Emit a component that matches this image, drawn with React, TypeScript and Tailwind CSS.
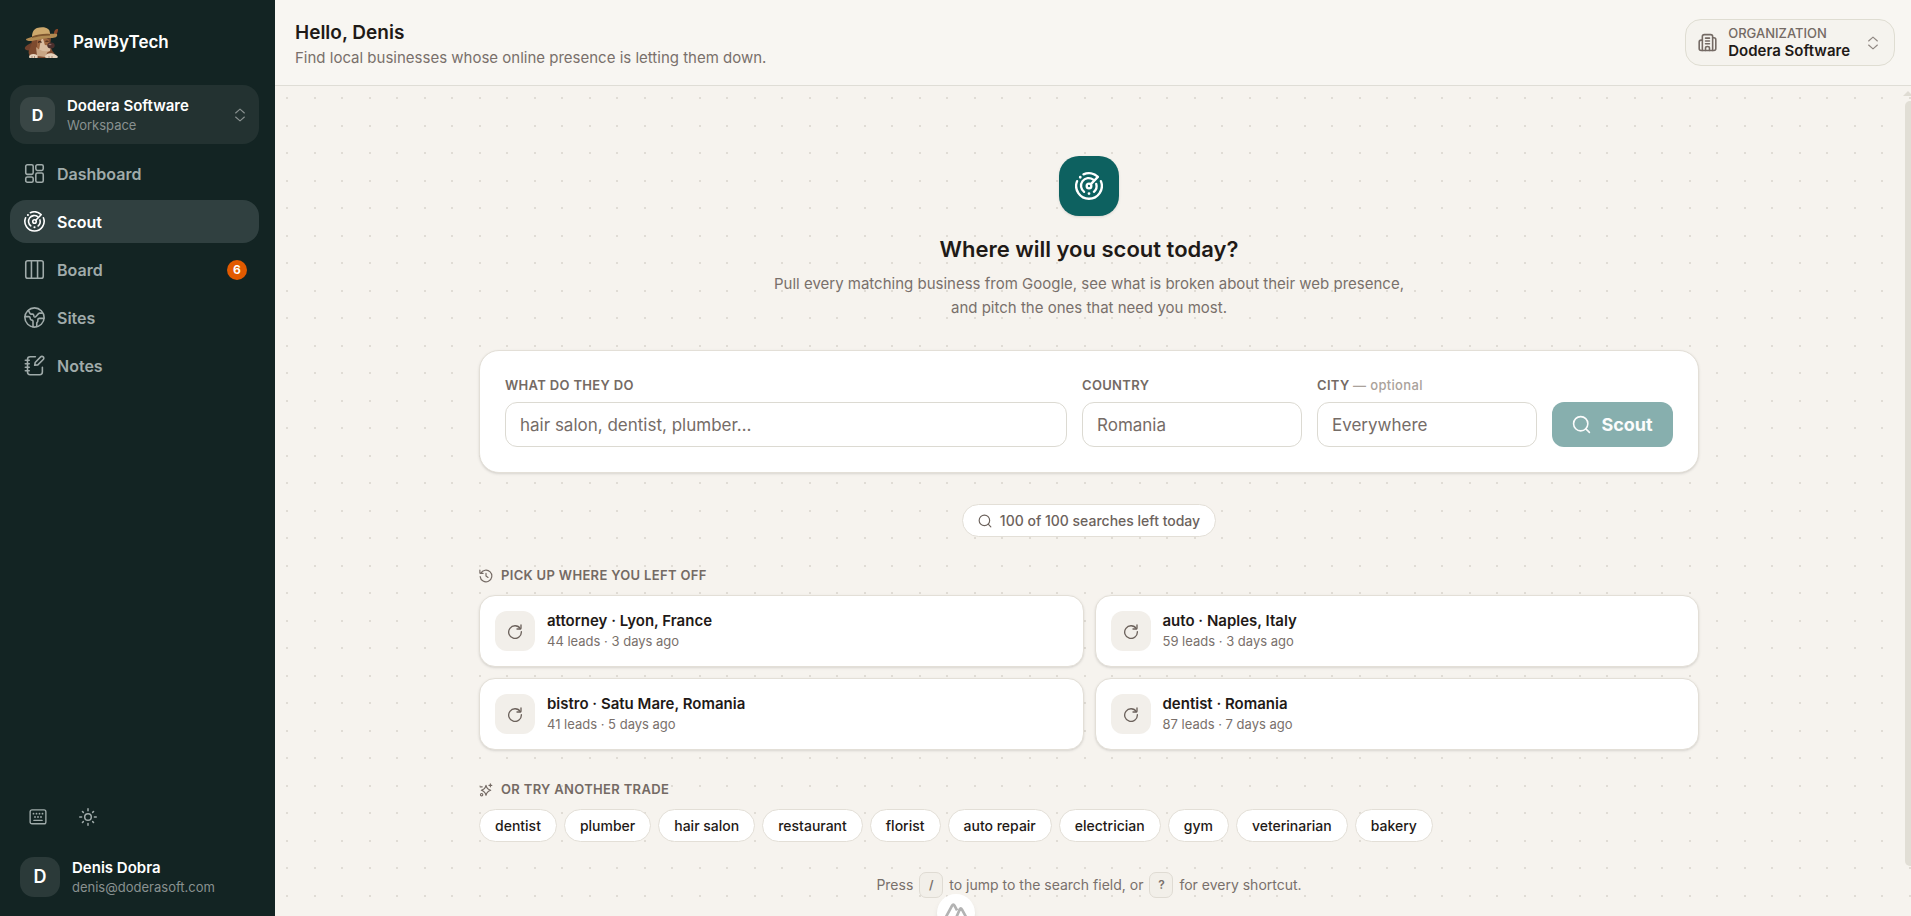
import type { ReactNode } from 'react'

type IconProps = { className?: string; width?: number }

function Icon({ className, width = 1.8, children }: IconProps & { children: ReactNode }) {
  return (
    <svg viewBox="0 0 24 24" fill="none" stroke="currentColor" strokeWidth={width} strokeLinecap="round" strokeLinejoin="round" className={className} aria-hidden="true">
      {children}
    </svg>
  )
}

const DashboardIcon = (p: IconProps) => (
  <Icon {...p}>
    <rect x="2" y="2" width="8.5" height="11" rx="1.8" />
    <rect x="13.5" y="2" width="8.5" height="6.5" rx="1.8" />
    <rect x="2" y="16" width="8.5" height="6" rx="1.8" />
    <rect x="13.5" y="11.5" width="8.5" height="10.5" rx="1.8" />
  </Icon>
)

const RadarIcon = (p: IconProps) => (
  <Icon {...p}>
    <path d="M7.3 2A11 11 0 0 1 19.6 4.2L13.4 10.6" />
    <path d="M22.2 7.8a11 11 0 1 1-20.4 0" />
    <path d="M15.6 6.500A6.500 6.500 0 0 0 7.800 17" />
    <path d="M18.200 10.200A6.500 6.500 0 0 1 16.200 17" />
    <circle cx="12" cy="12" r="2" />
    <path d="M4.500 4.500h.01M12 18.500h.01" strokeWidth="2.400" />
  </Icon>
)

const BoardIcon = (p: IconProps) => (
  <Icon {...p}>
    <rect x="2" y="2" width="20" height="20" rx="2.4" />
    <path d="M8.5 2v20M15.5 2v20" />
  </Icon>
)

const GlobeIcon = (p: IconProps) => (
  <Icon {...p}>
    <circle cx="12" cy="12" r="11" />
    <path d="M5 3.800l1.800 3.400c.3.600.8.900 1.500.900h1.500c.7 0 1.200.500 1.300 1.200l.2 1.200c.2 1 1.400 1.300 2.100.600l3.200-3.500c.4-.4.900-.6 1.400-.6h2.800" />
    <path d="M1.200 11h4.300c.8 0 1.400.500 1.500 1.300l.2 1.200c.1.700.6 1.100 1.200 1.300l.8.200c.7.200 1.100.7 1.100 1.400V22.800" />
    <path d="M22.800 13h-5.300c-1 0-1.700.700-1.700 1.700v1.300c0 .5-.2.900-.6 1.200-.4.300-.6.700-.6 1.200v4" />
  </Icon>
)

const NotesIcon = (p: IconProps) => (
  <Icon {...p}>
    <path d="M13 2H7C4.800 2 4 2.800 4 5v14.500c0 2.200.8 3 3 3h11c2.200 0 3-.8 3-3V14" />
    <path d="M1.500 6H6M1.500 10H6M1.500 14H6M1.500 18H6" />
    <path d="M12.200 11.800l.6-3.300L19 2.200a2.100 2.100 0 0 1 3 3L15.800 11.300z" />
  </Icon>
)

const KeyboardIcon = (p: IconProps) => (
  <Icon {...p}>
    <rect x="1.500" y="2.500" width="21" height="18.500" rx="2.500" />
    <path d="M6.500 16.500h11" />
    <path d="M6 7.500h.01M10 7.500h.01M14 7.500h.01M18 7.500h.01M8 12h.01M12 12h.01M16 12h.01" strokeWidth="2.400" />
  </Icon>
)

const SunIcon = (p: IconProps) => (
  <Icon {...p}>
    <circle cx="12" cy="12" r="4.400" />
    <path d="M12 1v2.500M12 20.500V23M1 12h2.500M20.500 12H23M4.600 4.600l1.200 1.200M18.200 18.200l1.200 1.200M4.600 19.400l1.200-1.200M18.200 5.800l1.200-1.200" />
  </Icon>
)

const UnfoldIcon = (p: IconProps) => (
  <Icon {...p}>
    <path d="M4.500 8.500L12 2l7.500 6.500M4.500 15.500L12 22l7.500-6.500" />
  </Icon>
)

const BuildingIcon = (p: IconProps) => (
  <Icon {...p}>
    <path d="M5.500 22V4.500c0-2 .6-2.500 2.500-2.500h8c1.900 0 2.500.5 2.500 2.500V22" />
    <path d="M5.500 9H4c-1.500 0-2.500.7-2.500 2.500v8c0 1.700.8 2.500 2.500 2.500h16c1.700 0 2.500-.8 2.500-2.500v-11C22.500 6.700 21.500 6 20 6h-1.500" />
    <path d="M9.500 22v-3c0-1.300.7-2 2.500-2s2.500.7 2.500 2v3M9.500 6.500h5M9.500 10h5M9.500 13.500h5" />
  </Icon>
)

const SearchIcon = (p: IconProps) => (
  <Icon {...p}>
    <circle cx="11" cy="11" r="9" />
    <path d="M17.500 17.500L22 22" />
  </Icon>
)

const HistoryIcon = (p: IconProps) => (
  <Icon {...p}>
    <path d="M1.500 2v4.500c0 .6.300 1 1 1H7M3 7.500A10 10 0 1 1 2 13" />
    <path d="M12 7.500V12l3.500 2.500" />
  </Icon>
)

const SparklesIcon = (p: IconProps) => (
  <Icon {...p}>
    <path d="M12 4c1.200 5.200 3 7 8 8.500-5 1.500-6.800 3.300-8 8.500-1.200-5.200-3-7-8-8.500 5-1.500 6.800-3.300 8-8.500z" />
    <path d="M19.500 1.500v5M17 4h5M2 6.500h3.500" />
    <circle cx="4.500" cy="20" r="2" />
  </Icon>
)

const RefreshIcon = (p: IconProps) => (
  <Icon {...p}>
    <path d="M21 3v5c0 .7-.3 1-1 1h-5" />
    <path d="M20 8.500A9.500 9.500 0 1 0 21.500 13" />
  </Icon>
)

function DogLogo() {
  return (
    <svg viewBox="0 0 36 32" className="h-8 w-9" aria-hidden="true">
      <path d="M7 16C3 18 0 20 1 22c1 2 6 2 8-1z" fill="#70402c" />
      <path d="M29 10c3-1 5-4 5-8-3 0-4 2-4 5z" fill="#8b482a" />
      <path d="M8 13c-1 4-1 7-3 10-1 3 0 7 4 8h19c3-1 4-4 1-6l-3-6 1-8z" fill="#7d4a2e" />
      <path d="M13 11c4-2 10-1 12 2l1 11-7 5-6-4z" fill="#9c6540" />
      <path d="M18 11c2 1 2 5 3 7l6 1-1 5-6 2-5-3c1-4 1-8 3-12z" fill="#d9bda1" />
      <path d="M12 20c3 3 7 5 12 4l-3 6-8-1z" fill="#c9a685" />
      <ellipse cx="27" cy="18.500" rx="3.700" ry="3" fill="#4b2f2c" />
      <ellipse cx="26" cy="17.500" rx="1.500" ry="0.8" fill="#8a6a66" />
      <path d="M14 15.500c1-1 2.500-1 3.500 0M21.500 14.500c1-.8 2-.7 3 0" stroke="#3f2419" strokeWidth="1.100" fill="none" />
      <path d="M5 30c0-3 5-4 8-2 1 1 1 3 0 3H7c-1 0-2 0-2-1zM21 29c1-3 7-4 11-1 3 2 2 3 0 3h-9c-2 0-2-1-2-2z" fill="#e6d2bd" />
      <path d="M8 29v2M10.500 29v2M25 29v2M28 29v2" stroke="#8c6a50" strokeWidth="0.700" />
      <path d="M2 12C9 9 25 6 33 7c1 3-2 4-6 4-7 0-13 2-19 3-3 0-6 0-6-2z" fill="#b08a52" />
      <path d="M8 10c0-5 2-8 5-9 4-1 9-1 11 1 2 1 2 4 2 6-6 0-12 1-18 3z" fill="#cda86c" />
      <path d="M8 9.500c5-2 12-3 18-2.500v1.500c-6 0-12 .8-18 2.500z" fill="#7e562f" />
    </svg>
  )
}

const navItems = [
  { label: 'Dashboard', icon: DashboardIcon },
  { label: 'Scout', icon: RadarIcon, active: true },
  { label: 'Board', icon: BoardIcon, badge: 6 },
  { label: 'Sites', icon: GlobeIcon },
  { label: 'Notes', icon: NotesIcon },
]

const recent = [
  { title: 'attorney · Lyon, France', meta: '44 leads · 3 days ago' },
  { title: 'auto · Naples, Italy', meta: '59 leads · 3 days ago' },
  { title: 'bistro · Satu Mare, Romania', meta: '41 leads · 5 days ago' },
  { title: 'dentist · Romania', meta: '87 leads · 7 days ago' },
]

const trades = ['dentist', 'plumber', 'hair salon', 'restaurant', 'florist', 'auto repair', 'electrician', 'gym', 'veterinarian', 'bakery']

function Sidebar() {
  return (
    <aside className="flex w-[275px] shrink-0 flex-col bg-[#132423] px-[10px] text-white">
      <a href="#" className="flex h-[85px] items-center gap-[13px] pl-[14px]">
        <DogLogo />
        <span className="text-[17px] font-semibold">PawByTech</span>
      </a>

      <button type="button" className="mr-[6px] flex h-[59px] items-center gap-3 rounded-2xl bg-[#233231] pr-3 pl-[10px] text-left">
        <span className="flex size-[35px] items-center justify-center rounded-[11px] bg-[#394645] text-base font-bold">D</span>
        <span className="flex-1">
          <span className="block text-[15px] leading-5 font-semibold">Dodera Software</span>
          <span className="block text-[13px] leading-[18px] text-[#899190]">Workspace</span>
        </span>
        <UnfoldIcon className="size-[14px] text-[#899190]" width={2} />
      </button>

      <nav className="mt-2 mr-[6px] flex flex-col gap-[5px]">
        {navItems.map(({ label, icon: NavIcon, active, badge }) => (
          <a
            key={label}
            href="#"
            className={`flex h-[43px] items-center gap-3 rounded-2xl px-[14px] text-base font-semibold ${active ? 'bg-[#304040] text-white' : 'text-[#a0abaa]'}`}
          >
            <NavIcon className="size-[21px]" />
            <span className="flex-1">{label}</span>
            {badge && (
              <span className="mr-[-2px] flex size-5 items-center justify-center rounded-full bg-[#e25a00] text-xs font-bold text-white">{badge}</span>
            )}
          </a>
        ))}
      </nav>

      <div className="mt-auto flex gap-8 pl-[19px] text-[#a0abaa]">
        <button type="button" aria-label="Keyboard shortcuts">
          <KeyboardIcon className="size-[18px]" />
        </button>
        <button type="button" aria-label="Toggle theme">
          <SunIcon className="size-[18px]" width={2} />
        </button>
      </div>

      <button type="button" className="mt-[31px] mb-[19px] flex items-center gap-3 pl-[10px] text-left">
        <span className="flex size-10 items-center justify-center rounded-[14px] bg-[#2b3a39] text-lg font-semibold">D</span>
        <span>
          <span className="block text-[15px] leading-5 font-semibold">Denis Dobra</span>
          <span className="block text-[13px] leading-[18px] text-[#899190]">denis@doderasoft.com</span>
        </span>
      </button>
    </aside>
  )
}

function Header() {
  return (
    <header className="flex h-[86px] shrink-0 items-center justify-between border-b border-[#dfddd6] bg-[#f8f6f2] pr-4 pl-5">
      <div className="pt-[3px]">
        <h1 className="text-[19px] leading-7 font-semibold text-[#1f1a17]">Hello, Denis</h1>
        <p className="text-[15px] leading-[22px] text-[#79706b]">Find local businesses whose online presence is letting them down.</p>
      </div>
      <button type="button" className="flex h-[47px] items-center rounded-2xl border border-[#dfddd2] bg-[#f5f3ee] pr-[14px] pl-3 text-left">
        <BuildingIcon className="size-[19px] text-[#746a64]" width={2} />
        <span className="mr-3 ml-[11px] pb-[2px]">
          <span className="block text-[13px] leading-[18px] font-medium text-[#746a64]">ORGANIZATION</span>
          <span className="block text-[15px] leading-[18px] font-semibold text-[#1f1a17]">Dodera Software</span>
        </span>
        <UnfoldIcon className="ml-1 size-[14px] text-[#8f8781]" width={2} />
      </button>
    </header>
  )
}

function SearchForm() {
  const input = 'h-[45px] w-full rounded-xl border border-[#dcdad2] bg-white px-[14px] text-[17px] text-[#1f1a17] placeholder:text-[#756c67]'
  const label = 'mb-2 block text-[13px] leading-[18px] font-semibold tracking-wide text-[#746a64]'
  return (
    <form className="mt-[30px] grid grid-cols-[1fr_220px_220px_121px] items-end gap-[15px] rounded-[20px] border border-[#e3dfd7] bg-white p-[25px] shadow-sm">
      <div>
        <label htmlFor="trade" className={label}>WHAT DO THEY DO</label>
        <input id="trade" className={input} placeholder="hair salon, dentist, plumber…" />
      </div>
      <div>
        <label htmlFor="country" className={label}>COUNTRY</label>
        <input id="country" className={input} placeholder="Romania" />
      </div>
      <div>
        <label htmlFor="city" className={label}>
          CITY <span className="font-medium text-[#aaa29b]">— optional</span>
        </label>
        <input id="city" className={input} placeholder="Everywhere" />
      </div>
      <button type="button" className="flex h-[45px] items-center justify-center gap-[10px] rounded-xl bg-[#87afae] text-lg font-bold text-[#fbfcfc]">
        <SearchIcon className="size-[19px]" width={2} />
        Scout
      </button>
    </form>
  )
}

function SectionTitle({ icon, children }: { icon: ReactNode; children: ReactNode }) {
  return (
    <h3 className="flex h-5 items-center gap-2 text-[13px] font-semibold tracking-wide text-[#746a64]">
      {icon}
      {children}
    </h3>
  )
}

function Key({ children }: { children: ReactNode }) {
  return (
    <kbd className="mx-[6px] flex h-[26px] w-6 items-center justify-center rounded-[7px] border border-[#dfdbd3] bg-[#f2efe9] font-[Inter,sans-serif] text-xs font-semibold">
      {children}
    </kbd>
  )
}

export default function App() {
  return (
    <div className="flex h-screen overflow-hidden font-[Inter,sans-serif]">
      <Sidebar />
      <div className="flex min-w-0 flex-1 flex-col">
        <Header />
        <div className="flex min-h-0 flex-1 bg-[#f6f3ee] bg-[radial-gradient(circle_at_12px_12px,#e0dcd5_1px,transparent_1px),radial-gradient(circle_at_40px_12px,#e0dcd5_1px,transparent_1px),radial-gradient(circle_at_12px_40px,#e0dcd5_1px,transparent_1px),radial-gradient(circle_at_40px_40px,#e0dcd5_1px,transparent_1px)] bg-[length:55px_55px]">
          <main className="min-w-0 flex-1 overflow-hidden">
            <div className="mx-auto flex max-w-[1220px] flex-col pt-[70px]">
              <div className="flex size-[60px] items-center justify-center self-center rounded-[20px] bg-[#0d6160] text-white shadow-sm">
                <RadarIcon className="size-7" width={2} />
              </div>
              <h2 className="mt-[17px] text-center text-[22px] leading-8 font-semibold text-[#1f1a17]">Where will you scout today?</h2>
              <p className="mt-[7px] text-center text-[15px] leading-6 text-[#79706b]">
                Pull every matching business from Google, see what is broken about their web presence,
                <br />
                and pitch the ones that need you most.
              </p>

              <SearchForm />

              <div className="mt-[31px] flex h-[33px] items-center gap-2 self-center rounded-full border border-[#e3dfd7] bg-white px-[15px] text-sm font-medium text-[#6c625c]">
                <SearchIcon className="size-[14px]" width={2} />
                100 of 100 searches left today
              </div>

              <section className="mt-[29px]">
                <SectionTitle icon={<HistoryIcon className="size-[14px]" width={2} />}>PICK UP WHERE YOU LEFT OFF</SectionTitle>
                <div className="mt-[9px] grid grid-cols-2 gap-[11px]">
                  {recent.map(item => (
                    <button key={item.title} type="button" className="flex h-[72px] items-center gap-3 rounded-2xl border border-[#e3dfd7] bg-white px-[15px] text-left shadow-sm">
                      <span className="flex size-10 items-center justify-center rounded-xl bg-[#f2efea] text-[#6c625c]">
                        <RefreshIcon className="size-4" width={2} />
                      </span>
                      <span>
                        <span className="block text-[15px] leading-5 font-semibold text-[#1f1a17]">{item.title}</span>
                        <span className="block text-[13px] leading-5 text-[#79706b]">{item.meta}</span>
                      </span>
                    </button>
                  ))}
                </div>
              </section>

              <section className="mt-[30px]">
                <SectionTitle icon={<SparklesIcon className="size-[14px]" width={2} />}>OR TRY ANOTHER TRADE</SectionTitle>
                <div className="mt-[9px] flex flex-wrap gap-[7px]">
                  {trades.map(trade => (
                    <button key={trade} type="button" className="h-[33px] rounded-full border border-[#e3dfd7] bg-white px-[15px] text-sm font-medium text-[#1f1a17]">
                      {trade}
                    </button>
                  ))}
                </div>
              </section>

              <p className="mt-[30px] flex items-center justify-center text-sm text-[#79706b]">
                Press <Key>/</Key> to jump to the search field, or <Key>?</Key> for every shortcut.
              </p>
            </div>
          </main>

          {/* scroll rail */}
          <div className="flex w-2 flex-col items-end pt-[5px]">
            <svg viewBox="0 0 8 5" className="h-[5px] w-2" aria-hidden="true">
              <path d="M0 5L5 0l5 5z" fill="#dfdcd3" />
            </svg>
            <div className="mt-[5px] mb-[50px] w-[6px] flex-1 rounded-l-[5px] bg-[#e1ded5]" />
          </div>
        </div>
      </div>

      {/* devtools toggle, peeks over the bottom edge */}
      <button type="button" aria-label="Open devtools" className="fixed -bottom-4 left-1/2 flex size-[38px] -translate-x-1/2 items-center justify-center rounded-full bg-white text-[#b3b3b3] shadow-md">
        <svg viewBox="0 0 24 20" fill="none" stroke="currentColor" strokeWidth="2.500" strokeLinejoin="round" className="h-[22px] w-[26px]" aria-hidden="true">
          <path d="M12 17H3c-1 0-1.500-1-1-2L8.500 3c.5-1 1.500-1 2 0L13 7.500M11 17L15.500 6.500c.5-1 1.300-1 1.800 0L22 15c.6 1 0 2-1 2z" />
        </svg>
      </button>
    </div>
  )
}
